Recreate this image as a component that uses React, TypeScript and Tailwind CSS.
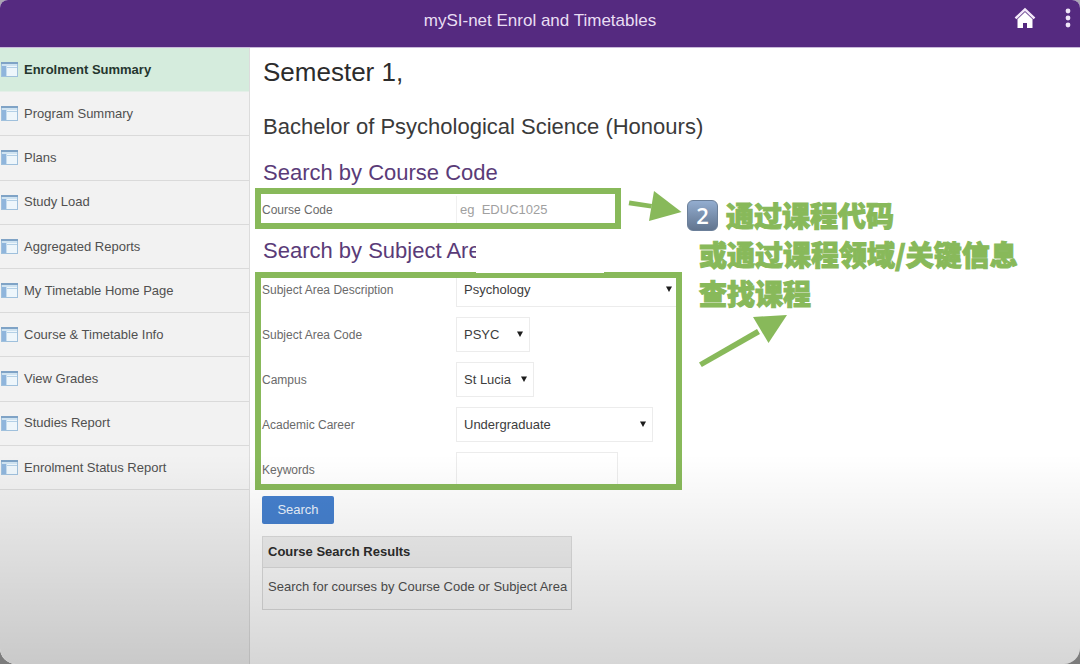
import { useState } from "react";

const NAV_ITEMS = [
  "Enrolment Summary",
  "Program Summary",
  "Plans",
  "Study Load",
  "Aggregated Reports",
  "My Timetable Home Page",
  "Course & Timetable Info",
  "View Grades",
  "Studies Report",
  "Enrolment Status Report",
];

const FILTERS = [
  { id: "subject", label: "Subject Area Description", value: "Psychology", width: "w-[223px]" },
  { id: "subject-code", label: "Subject Area Code", value: "PSYC", width: "w-[74px]" },
  { id: "campus", label: "Campus", value: "St Lucia", width: "w-[78px]" },
  { id: "career", label: "Academic Career", value: "Undergraduate", width: "w-[197px]" },
];

function PanelIcon() {
  return (
    <svg width="17" height="15" viewBox="0 0 17 15" className="shrink-0" aria-hidden="true">
      <rect x="0.5" y="0.5" width="16" height="14" fill="#eef6fb" stroke="#9fc0dc" />
      <rect x="0" y="0" width="17" height="2" fill="#7fa3c6" />
      <rect x="1" y="2" width="15" height="2" fill="#cfe3f1" />
      <rect x="1" y="4" width="4" height="10" fill="#8fb5dc" />
      <rect x="5" y="4" width="1" height="10" fill="#c5dcee" />
      <rect x="6" y="5" width="10" height="1" fill="#b4d0e6" />
    </svg>
  );
}

function SelectField({ id, value, width }: { id: string; value: string; width: string }) {
  return (
    <div className={`relative shrink-0 ${width}`}>
      <select
        id={id}
        defaultValue={value}
        className="block h-[35px] w-full appearance-none border border-[#ececec] bg-white pl-[7px] text-[13px] text-[#3d3d3d] outline-none"
      >
        <option>{value}</option>
      </select>
      <svg width="6" height="6" viewBox="0 0 6 6" className="pointer-events-none absolute right-[7px] top-[14px]" aria-hidden="true">
        <path d="M0 0.5H6L3 6Z" fill="#1c1c1c" />
      </svg>
    </div>
  );
}

export default function App() {
  const [active, setActive] = useState(0);
  const [code, setCode] = useState("");

  return (
    <div className="bg-gradient-to-b from-[#aaa6b4] to-[#7c7c7c] font-['Liberation_Sans',Arial,sans-serif]">
      <div className="relative flex min-h-screen flex-col overflow-hidden rounded-t-lg rounded-b-2xl bg-white">
        <header className="grid h-12 grid-cols-[1fr_auto_1fr] items-center border-b border-[#c9b9da] bg-[#552a80] pb-[6px]">
          <h1 className="col-start-2 text-[17px] text-[#e9def3]">mySI-net Enrol and Timetables</h1>
          <div className="flex items-center justify-end gap-7 pb-[6px] pr-2">
            <button aria-label="Home">
              <svg width="22" height="22" viewBox="0 0 22 22" className="block">
                <path d="M3.500 12L11 5.200L18.500 12V21H13V16H9V21H3.500Z" fill="#fff" />
                <path d="M1.500 11.300L11 2.300L20.500 11.300" fill="none" stroke="#f3e9f9" strokeWidth="2.400" />
                <path d="M3.600 12L11 5L18.400 12" fill="none" stroke="#b7a4cb" strokeWidth="0.700" />
              </svg>
            </button>
            <button aria-label="More actions">
              <svg width="8" height="20" viewBox="0 0 8 20" className="block">
                <circle cx="4" cy="3" r="2.400" fill="#efe5f7" />
                <circle cx="4" cy="10" r="2.400" fill="#efe5f7" />
                <circle cx="4" cy="17" r="2.400" fill="#efe5f7" />
              </svg>
            </button>
          </div>
        </header>

        <div className="flex flex-1">
          <nav className="w-[250px] shrink-0 border-r border-[#dcdcdc] bg-[#f0f0f0]">
            <ul className="grid h-[442px] auto-rows-fr">
              {NAV_ITEMS.map((item, i) => (
                <li key={item}>
                  <a
                    href="#"
                    onClick={() => setActive(i)}
                    className={`flex h-full items-center gap-[6px] border-b pl-px text-[13px] ${
                      i === active
                        ? "border-[#e4efe8] bg-[#d5ecdd] font-bold text-[#25362e]"
                        : "border-[#dadada] bg-[#f2f2f2] text-[#505050]"
                    }`}
                  >
                    <PanelIcon />
                    {item}
                  </a>
                </li>
              ))}
            </ul>
          </nav>

          <main className="min-w-0 flex-1 pl-[5px]">
            <h2 className="pl-2 text-[26px] leading-[48px] text-[#2c2c2c]">Semester 1,</h2>
            <h3 className="pl-2 text-[22px] leading-[62px] text-[#3a3a3a]">Bachelor of Psychological Science (Honours)</h3>

            <div className="flex items-start">
              <form className="w-[427px] shrink-0" onSubmit={(e) => e.preventDefault()}>
                <h3 className="pl-2 text-[22px] leading-[30px] text-[#5a3b78]">Search by Course Code</h3>
                <div className="flex items-start">
                  <div className="grid h-[41px] w-[366px] grid-cols-[194px_1fr] items-center border-[6px] border-[#88b95a] pl-px pt-[2px]">
                    <label htmlFor="code" className="text-[12px] text-[#6a6a6a]">Course Code</label>
                    <input
                      id="code"
                      value={code}
                      onChange={(e) => setCode(e.target.value)}
                      placeholder={"eg\u00a0 EDUC1025"}
                      className="h-full w-full border-l border-[#f0f0f0] pl-[3px] text-[13px] text-[#3d3d3d] outline-none placeholder:text-[#a0a0a0]"
                    />
                  </div>
                  <svg width="54" height="34" viewBox="0 0 54 34" className="ml-[7px]" aria-hidden="true">
                    <path d="M1.500 12.500L24 16L23.300 20.500L0.600 17.200Z" fill="#88b95a" />
                    <path d="M26 3L53.500 24L21 33Z" fill="#88b95a" />
                  </svg>
                </div>

                <div className="relative">
                  <h3 className="pl-2 text-[22px] leading-[43px] text-[#5a3b78]">Search by Subject Are</h3>
                  <div className="absolute -bottom-px left-[221px] z-10 h-10 w-[128px] bg-white" />
                </div>

                <div className="overflow-hidden border-[6px] border-[#88b95a] pl-px">
                  <div className="-mb-2 -mt-[11px]">
                    {FILTERS.map((f) => (
                      <div key={f.id} className="grid h-[45px] grid-cols-[194px_1fr] items-center">
                        <label htmlFor={f.id} className="text-[12px] text-[#6a6a6a]">{f.label}</label>
                        <SelectField id={f.id} value={f.value} width={f.width} />
                      </div>
                    ))}
                    <div className="grid h-[45px] grid-cols-[194px_1fr] items-center">
                      <label htmlFor="keywords" className="text-[12px] text-[#6a6a6a]">Keywords</label>
                      <input id="keywords" className="h-[35px] w-[162px] border border-[#ececec] px-2 text-[13px] outline-none" />
                    </div>
                  </div>
                </div>

                <div className="pl-[7px]">
                  <button className="mt-[6px] block h-7 w-[72px] rounded-[2px] bg-[#4580ce] text-[13px] text-[#eaf2fd]">
                    Search
                  </button>
                  <section className="mt-3 w-[310px] border border-[#dcdcdc] bg-[#fbfbfb] text-[13px]">
                    <h4 className="border-b border-[#dcdcdc] bg-[#eeeeee] pl-[5px] font-bold leading-[30px] text-[#2c2c2c]">
                      Course Search Results
                    </h4>
                    <p className="pl-[5px] pb-1 leading-[37px] text-[#505050]">Search for courses by Course Code or Subject Area</p>
                  </section>
                </div>
              </form>

              <aside className="ml-[5px] pt-[38px]">
                <div className="whitespace-nowrap font-['Noto_Sans_CJK_SC',sans-serif] text-[28px] font-black leading-[39px] text-[#88b95a] [-webkit-text-stroke:1px_#88b95a]">
                  <p className="flex items-center gap-2">
                    <span className="flex size-[31px] items-center justify-center rounded-[6px] border border-[#6b7f99] bg-gradient-to-b from-[#93add0] to-[#62758f] font-['Open_Sans',sans-serif] text-[22px] font-semibold text-white [-webkit-text-stroke:0px]">
                      2
                    </span>
                    通过课程代码
                  </p>
                  <p className="pl-3">或通过课程领域/关键信息</p>
                  <p className="pl-3">查找课程</p>
                </div>
                <svg width="90" height="54" viewBox="0 0 90 54" className="ml-3" aria-hidden="true">
                  <path d="M0 49.500L58 16L61 21L2.800 54Z" fill="#88b95a" />
                  <path d="M54 4L88 2L69.500 30Z" fill="#88b95a" />
                </svg>
              </aside>
            </div>
          </main>
        </div>

        {/* shade along the bottom of the page */}
        <div className="pointer-events-none absolute inset-x-0 bottom-0 z-20 h-[210px] bg-gradient-to-b from-black/0 to-black/16" />
      </div>
    </div>
  );
}
